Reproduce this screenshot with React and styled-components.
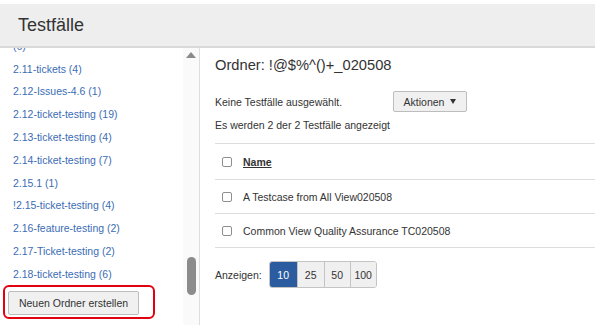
import React from "react";
import styled, { createGlobalStyle } from "styled-components";

const Global = createGlobalStyle`
  html, body { margin: 0; padding: 0; background: #fff; }
  body { font-family: "Liberation Sans", Arial, sans-serif; color: #333; }
  * { box-sizing: border-box; }
`;

const Page = styled.div`
  width: 595px;
  height: 325px;
  overflow: hidden;
  padding-top: 4px;
  display: flex;
  flex-direction: column;
  background: #fff;
`;

const Header = styled.header`
  height: 44px;
  flex: none;
  background: #eeeeee;
  border-bottom: 2px solid #d9d9d9;
  display: flex;
  align-items: center;
  padding-left: 18px;
  font-size: 18px;
  color: #333;
`;

const Main = styled.div`
  flex: 1;
  display: flex;
  min-height: 0;
`;

const Sidebar = styled.aside`
  width: 200px;
  flex: none;
  display: flex;
  border-right: 1px solid #dedede;
`;

const SideContent = styled.div`
  flex: 1;
  display: flex;
  flex-direction: column;
  min-width: 0;
`;

const ListArea = styled.div`
  flex: 1;
  overflow: hidden;
`;

const FolderList = styled.ul`
  list-style: none;
  margin: -36px 0 0;
  padding: 0 0 0 13px;
`;

const Folder = styled.li`
  font-size: 10.5px;
  line-height: 22.8px;
  color: #3b6db5;
  white-space: nowrap;
`;

const Footer = styled.div`
  flex: none;
  padding: 2px 0 6px 3px;
`;

const Highlight = styled.div`
  width: 152px;
  height: 34px;
  border: 2px solid #e3000f;
  border-radius: 6px;
  padding: 4px 3px;
`;

const Button = styled.button`
  font-family: inherit;
  font-size: 10.5px;
  color: #333;
  background: #f0f0f0;
  border: 1px solid #bdbdbd;
  border-radius: 2px;
  height: ${(p) => p.$h || 24}px;
  width: ${(p) => p.$w}px;
  padding: 0;
  display: flex;
  align-items: center;
  justify-content: center;
  gap: 6px;
`;

const Track = styled.div`
  width: 16px;
  flex: none;
  background: #fafafa;
  display: flex;
  flex-direction: column;
  align-items: center;
`;

const Arrow = styled.div`
  margin-top: 4px;
  width: 0;
  height: 0;
  border-left: 5px solid transparent;
  border-right: 5px solid transparent;
  border-bottom: 6px solid #8a8a8a;
`;

const Thumb = styled.div`
  margin-top: ${(p) => p.$offset}px;
  width: 9px;
  height: 38px;
  border-radius: 5px;
  background: #8c8c8c;
`;

const Content = styled.section`
  flex: 1;
  padding: 8px 0 0 15px;
  min-width: 0;
`;

const Title = styled.h2`
  margin: 0;
  font-weight: normal;
  font-size: 14.7px;
  line-height: 18px;
  color: #333;
  white-space: nowrap;
`;

const ActionRow = styled.div`
  margin-top: 17px;
  display: flex;
  align-items: center;
  height: 21px;
`;

const Small = styled.div`
  font-size: 10.5px;
  line-height: 14px;
  color: #333;
  white-space: nowrap;
  width: ${(p) => (p.$w ? p.$w + "px" : "auto")};
  margin-top: ${(p) => p.$mt || 0}px;
`;

const Caret = styled.span`
  width: 0;
  height: 0;
  border-left: 3.5px solid transparent;
  border-right: 3.5px solid transparent;
  border-top: 5px solid #333;
`;

const Table = styled.div`
  margin-top: 11px;
  border-top: 1px solid #dddddd;
`;

const Row = styled.div`
  height: ${(p) => (p.$head ? 36 : 34)}px;
  border-bottom: 1px solid #dddddd;
  display: flex;
  align-items: center;
  padding-left: 7px;
  font-size: 10.5px;
  white-space: nowrap;
`;

const Check = styled.span`
  width: 10px;
  height: 10px;
  border: 1px solid #8f8f8f;
  border-radius: 2px;
  background: #fff;
  margin-right: 11px;
  flex: none;
`;

const HeadLabel = styled.span`
  font-weight: bold;
  text-decoration: underline;
  color: #333;
`;

const Pager = styled.div`
  margin-top: 13px;
  display: flex;
  align-items: center;
  font-size: 10.5px;
`;

const PagerLabel = styled.span`
  margin-right: 7px;
`;

const PageGroup = styled.div`
  display: flex;
  border-radius: 3px;
  overflow: hidden;
  border: 1px solid #c4c4c4;
`;

const PageBtn = styled.div`
  width: ${(p) => p.$w}px;
  height: 25px;
  display: flex;
  align-items: center;
  justify-content: center;
  background: ${(p) => (p.$active ? "#2b5c9f" : "#f0f0f0")};
  color: ${(p) => (p.$active ? "#fff" : "#333")};
  border-left: ${(p) => (p.$first ? "none" : "1px solid #c4c4c4")};
  font-size: 10.5px;
`;

const folders = [
  ["2.10-ticket-testing-regression", "(6)"],
  ["2.11-tickets (4)"],
  ["2.12-Issues-4.6 (1)"],
  ["2.12-ticket-testing (19)"],
  ["2.13-ticket-testing (4)"],
  ["2.14-ticket-testing (7)"],
  ["2.15.1 (1)"],
  ["!2.15-ticket-testing (4)"],
  ["2.16-feature-testing (2)"],
  ["2.17-Ticket-testing (2)"],
  ["2.18-ticket-testing (6)"],
  ["2.19-ticket-testing (3)"],
];

const pages = [
  { n: "10", w: 27, active: true },
  { n: "25", w: 27 },
  { n: "50", w: 26 },
  { n: "100", w: 26 },
];

export default function App() {
  return (
    <>
      <Global />
      <Page>
        <Header>Testfälle</Header>
        <Main>
          <Sidebar>
            <SideContent>
              <ListArea>
                <FolderList>
                  {folders.map((f, i) => (
                    <Folder key={i}>
                      {f[0]}
                      {f[1] && (
                        <>
                          <br />
                          {f[1]}
                        </>
                      )}
                    </Folder>
                  ))}
                </FolderList>
              </ListArea>
              <Footer>
                <Highlight>
                  <Button $w={131}>Neuen Ordner erstellen</Button>
                </Highlight>
              </Footer>
            </SideContent>
            <Track>
              <Arrow />
              <Thumb $offset={199} />
            </Track>
          </Sidebar>
          <Content>
            <Title>Ordner: !@$%^()+_020508</Title>
            <ActionRow>
              <Small $w={178}>Keine Testfälle ausgewählt.</Small>
              <Button $w={74} $h={21}>
                Aktionen <Caret />
              </Button>
            </ActionRow>
            <Small $mt={6}>Es werden 2 der 2 Testfälle angezeigt</Small>
            <Table>
              <Row $head>
                <Check />
                <HeadLabel>Name</HeadLabel>
              </Row>
              <Row>
                <Check />A Testcase from All View020508
              </Row>
              <Row>
                <Check />
                Common View Quality Assurance TC020508
              </Row>
            </Table>
            <Pager>
              <PagerLabel>Anzeigen:</PagerLabel>
              <PageGroup>
                {pages.map((p, i) => (
                  <PageBtn key={p.n} $w={p.w} $active={p.active} $first={i === 0}>
                    {p.n}
                  </PageBtn>
                ))}
              </PageGroup>
            </Pager>
          </Content>
        </Main>
      </Page>
    </>
  );
}
